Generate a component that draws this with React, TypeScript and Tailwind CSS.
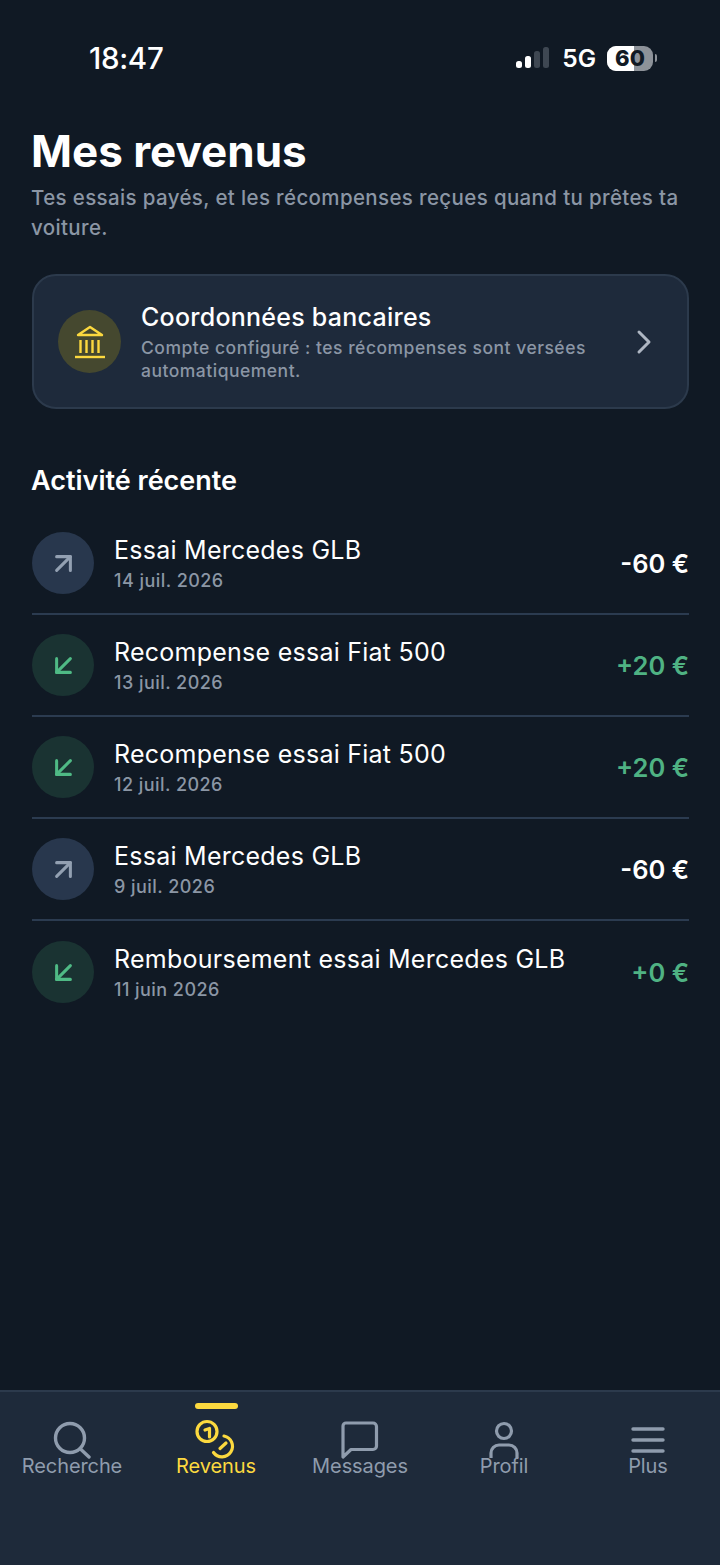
import { ChevronRight, ArrowUpRight, ArrowDownLeft } from 'lucide-react';

const ACTIVITY = [
  { title: 'Essai Mercedes GLB', date: '14 juil. 2026', amount: '-60 €', income: false },
  { title: 'Recompense essai Fiat 500', date: '13 juil. 2026', amount: '+20 €', income: true },
  { title: 'Recompense essai Fiat 500', date: '12 juil. 2026', amount: '+20 €', income: true },
  { title: 'Essai Mercedes GLB', date: '9 juil. 2026', amount: '-60 €', income: false },
  { title: 'Remboursement essai Mercedes GLB', date: '11 juin 2026', amount: '+0 €', income: true },
];

function StatusBar() {
  return (
    <div className="flex items-center justify-between h-[36px] pl-[89px] pr-[63px] mt-[40px]">
      <span className="pt-[2px] text-[29.5px] font-medium text-white leading-none tracking-[-0.3px]">18:47</span>
      <div className="flex items-center">
        <svg width="36" height="24" viewBox="0 0 36 24" className="mr-[11px]">
          <rect x="1" y="15" width="6" height="7" rx="2.5" fill="#fff" />
          <rect x="10" y="10" width="6" height="12" rx="2.5" fill="#fff" />
          <rect x="19" y="5" width="6" height="17" rx="2.5" fill="#3e4752" />
          <rect x="28" y="1" width="6" height="21" rx="2.5" fill="#3e4752" />
        </svg>
        <span className="text-[24.5px] font-semibold text-white leading-none mr-[11px]">5G</span>
        <div className="relative flex items-center">
          <div className="relative w-[46px] h-[25px] rounded-[9px] overflow-hidden bg-[#8d9299] flex items-center justify-center">
            <div className="absolute left-0 top-0 bottom-0 w-[27px] bg-white" />
            <span className="relative text-[22px] font-extrabold text-[#111a25] leading-none">60</span>
          </div>
          <div className="ml-[2px] w-[2px] h-[8px] rounded-r-full bg-[#8d9299]" />
        </div>
      </div>
    </div>
  );
}

function BankIcon() {
  return (
    <svg width="30" height="34" viewBox="0 0 30 34" fill="none" stroke="#fcd93f" strokeWidth="2.4">
      <path d="M3 10 L15 2 L27 10 Z" strokeLinejoin="round" />
      <path d="M5.500 15v13M11.500 15v13M17.500 15v13M23.500 15v13" />
      <path d="M0 32h30" />
    </svg>
  );
}

function ActivityRow({ item, last }: { item: (typeof ACTIVITY)[number]; last: boolean }) {
  return (
    <div className={`flex items-center h-[102px] ${last ? '' : 'border-b-2 border-[#2b3b50]'}`}>
      <div className={`w-[62px] h-[62px] rounded-full flex items-center justify-center shrink-0 ${item.income ? 'bg-[#1a3332]' : 'bg-[#28374d]'}`}>
        {item.income
          ? <ArrowDownLeft size={33} color="#4fba85" strokeWidth={2.2} />
          : <ArrowUpRight size={33} color="#93a0b2" strokeWidth={2.2} />}
      </div>
      <div className="ml-[20px] flex-1 min-w-0">
        <p className="text-[25px] leading-[32px] text-white tracking-[0.25px]">{item.title}</p>
        <p className="text-[18px] leading-[24px] mt-[3px] font-medium text-[#8b96a5] tracking-[0.45px]">{item.date}</p>
      </div>
      <span className={`pt-[2px] text-[25.5px] font-semibold ${item.income ? 'text-[#4fb283]' : 'text-white'}`}>{item.amount}</span>
    </div>
  );
}

function NavItem({ label, active, children }: { label: string; active?: boolean; children: React.ReactNode }) {
  return (
    <div className="relative flex-1 flex flex-col items-center pt-[30px]">
      {active && <div className="absolute top-[11px] w-[43px] h-[6px] rounded-full bg-[#fcd93f]" />}
      <div className="h-[36px] flex items-center justify-center">{children}</div>
      <span className={`text-[20px] leading-[24px] mt-[-4px] relative tracking-[-0.1px] ${active ? 'text-[#fcd93f]' : 'text-[#8f9cad]'}`}>{label}</span>
    </div>
  );
}

export default function App() {
  return (
    <div className="w-[720px] h-[1565px] bg-[#101924] flex flex-col font-['Inter',sans-serif] overflow-hidden">
      <StatusBar />

      <div className="flex-1 pl-[32px] pr-[31px]">
        <h1 className="mt-[47px] -ml-px text-[44px] leading-[56px] font-bold text-white">Mes revenus</h1>
        <p className="mt-[4px] -ml-px text-[20.5px] leading-[30px] font-medium text-[#8b96a5] tracking-[0.36px]">
          Tes essais payés, et les récompenses reçues quand tu prêtes ta voiture.
        </p>

        {/* Bank details */}
        <div className="mt-[31px] h-[135px] flex items-center rounded-[24px] bg-[#1e2a3b] border-2 border-[#2c3a4c] pl-[24px] pr-[23px]">
          <div className="w-[63px] h-[63px] rounded-full bg-[#45482f] flex items-center justify-center shrink-0">
            <BankIcon />
          </div>
          <div className="ml-[20px] flex-1 min-w-0">
            <p className="text-[25px] leading-[32px] font-medium text-white tracking-[0.25px]">Coordonnées bancaires</p>
            <p className="mt-[3px] text-[17.5px] leading-[23px] font-medium text-[#8b96a5] tracking-[0.5px]">
              Compte configuré : tes récompenses sont versées automatiquement.
            </p>
          </div>
          <ChevronRight size={40} color="#aeb6c2" strokeWidth={1.8} className="ml-[18px] shrink-0" />
        </div>

        <h2 className="mt-[54px] -ml-px text-[27px] leading-[36px] font-semibold text-white">Activité récente</h2>

        <div className="mt-[14px]">
          {ACTIVITY.map((item, i) => (
            <ActivityRow key={i} item={item} last={i === ACTIVITY.length - 1} />
          ))}
        </div>
      </div>

      <nav className="h-[175px] shrink-0 flex bg-[#1e2a3a] border-t-2 border-[#2c3a4c]">
        <NavItem label="Recherche">
          <svg width="38" height="38" viewBox="0 0 38 38" fill="none" stroke="#8f9cad" strokeWidth="3.4" strokeLinecap="round">
            <circle cx="17" cy="17" r="14.500" />
            <path d="M27.500 28 L36 36" />
          </svg>
        </NavItem>
        <NavItem label="Revenus" active>
          <svg width="42" height="42" viewBox="0 0 42 42" fill="none" stroke="#fcd93f" strokeWidth="3.2" strokeLinecap="round" strokeLinejoin="round" className="-my-[3px]">
            <circle cx="12" cy="12.500" r="10" />
            <path d="M10 11 L14.500 9.500 V18" />
            <path d="M29 17 A10.500 10.500 0 1 1 18.500 33.500" />
            <path d="M25 29.500 L31 24" />
          </svg>
        </NavItem>
        <NavItem label="Messages">
          <svg width="38" height="38" viewBox="0 0 38 38" fill="none" stroke="#8f9cad" strokeWidth="3.2" strokeLinejoin="round">
            <path d="M5 2 H32 A3.500 3.500 0 0 1 35.500 5.500 V25 A3.500 3.500 0 0 1 32 28.500 H10 L2 36 V5 A3 3 0 0 1 5 2 Z" />
          </svg>
        </NavItem>
        <NavItem label="Profil">
          <svg width="32" height="38" viewBox="0 0 32 38" fill="none" stroke="#8f9cad" strokeWidth="3.2">
            <circle cx="16" cy="10" r="7.500" />
            <path d="M3 37 V32 A8 8 0 0 1 11 24 H21 A8 8 0 0 1 29 32 V37" />
          </svg>
        </NavItem>
        <NavItem label="Plus">
          <svg width="34" height="38" viewBox="0 0 34 38" fill="none" stroke="#8f9cad" strokeWidth="3.4" strokeLinecap="round">
            <path d="M2 8 H32 M2 19 H32 M2 30 H32" />
          </svg>
        </NavItem>
      </nav>
    </div>
  );
}
